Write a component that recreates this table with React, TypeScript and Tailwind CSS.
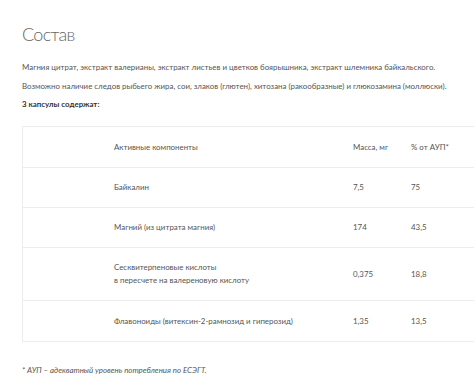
import React from "react";

const rows: { name: string[]; mass: string; pct: string; h: string }[] = [
  { name: ["Байкалин"], mass: "7,5", pct: "75", h: "h-[40px]" },
  { name: ["Магний (из цитрата магния)"], mass: "174", pct: "43,5", h: "h-[40px]" },
  { name: ["Сесквитерпеновые кислоты", "в пересчете на валереновую кислоту"], mass: "0,375", pct: "18,8", h: "h-[53px]" },
  { name: ["Флавоноиды (витексин-2-рамнозид и гиперозид)"], mass: "1,35", pct: "13,5", h: "h-[40px]" },
];

export default function App() {
  return (
    <div className="w-[474px] h-[390px] overflow-hidden bg-white text-[#555]" style={{ fontFamily: "Lato, 'Open Sans', sans-serif" }}>
      <div className="pl-[22px] pt-[22px]">
        <h1 className="text-[18px] font-light leading-[24px] tracking-[-0.7px] text-[#666]">Состав</h1>
        <p className="mt-[15px] text-[7.9px] leading-[12px] whitespace-nowrap">
          Магния цитрат, экстракт валерианы, экстракт листьев и цветков боярышника, экстракт шлемника байкальского.
        </p>
        <p className="mt-[7px] text-[7.9px] leading-[12px] whitespace-nowrap">
          Возможно наличие следов рыбьего жира, сои, злаков (глютен), хитозана (ракообразные) и глюкозамина (моллюски).
        </p>
        <p className="mt-[6px] text-[7.9px] leading-[12px] font-bold text-[#333]">3 капсулы содержат:</p>
        <div className="mt-[16px] w-[480px] border-l border-t border-b border-[#ececec] text-[7.9px] leading-[13px]">
          <div className="flex items-center h-[41px] border-b border-[#ececec]">
            <div className="w-[91px]" />
            <div className="w-[239px]">Активные компоненты</div>
            <div className="w-[58px]">Масса, мг</div>
            <div>% от АУП*</div>
          </div>
          {rows.map((r, i) => (
            <div key={i} className={`flex items-center ${r.h} ${i < rows.length - 1 ? "border-b border-[#ececec]" : ""}`}>
              <div className="w-[91px]" />
              <div className="w-[239px]">
                {r.name.map((n, j) => (
                  <div key={j}>{n}</div>
                ))}
              </div>
              <div className="w-[58px]">{r.mass}</div>
              <div>{r.pct}</div>
            </div>
          ))}
        </div>
        <p className="mt-[22px] text-[7.9px] leading-[12px] italic">* АУП – адекватный уровень потребления по ЕСЭГТ.</p>
      </div>
    </div>
  );
}
